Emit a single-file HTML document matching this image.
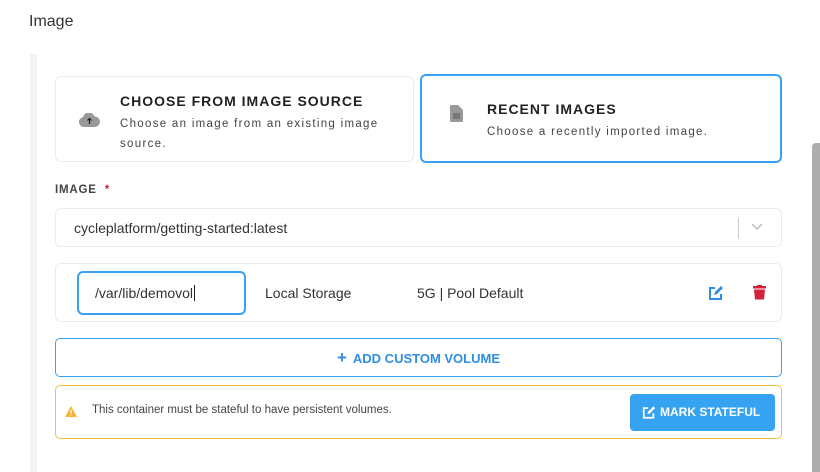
<!DOCTYPE html>
<html><head><style>
*{box-sizing:border-box;margin:0;padding:0}
body{width:820px;height:472px;background:#fff;font-family:"Liberation Sans",sans-serif;position:relative;overflow:hidden;color:#333}
.a{position:absolute}
.card{border:1px solid #ececec;border-radius:6px;background:#fff}
.t{font-size:14px;font-weight:bold;letter-spacing:1px;color:#222}
.s{font-size:11.5px;letter-spacing:1.3px;color:#444;line-height:20px}
</style></head><body>
<div class="a" style="left:29px;top:13px;font-size:16px;color:#333">Image</div>
<div class="a" style="left:30px;top:54px;width:7px;height:418px;background:#f3f3f3"></div>
<div class="a" style="left:812px;top:143px;width:8px;height:329px;background:#adadad;border-radius:4px 0 0 0"></div>

<div class="a card" style="left:55px;top:76px;width:359px;height:86px">
 <svg class="a" style="left:23px;top:36px" width="21" height="14" viewBox="0 0 21 14"><path d="M5 14a5 5 0 0 1-1-9.9A6 6 0 0 1 15.5 3.5 5 5 0 0 1 16 14z" fill="#999"/><path d="M10.5 11V5.5M8.5 7.5l2-2 2 2" stroke="#222" stroke-width="1.2" fill="none"/></svg>
 <div class="a t" style="left:64px;top:16px">CHOOSE FROM IMAGE SOURCE</div>
 <div class="a s" style="left:64px;top:37px;width:275px">Choose an image from an existing image source.</div>
</div>
<div class="a" style="left:420px;top:74px;width:362px;height:89px;border:2px solid #3ba0f0;border-radius:6px">
 <svg class="a" style="left:28px;top:29px" width="13" height="17" viewBox="0 0 13 17"><path d="M1 0h7l5 5v11a1 1 0 0 1-1 1H1a1 1 0 0 1-1-1V1a1 1 0 0 1 1-1z" fill="#999"/><path d="M3 9h7M3 11h7M3 13h7" stroke="#555" stroke-width="1"/></svg>
 <div class="a t" style="left:65px;top:25px">RECENT IMAGES</div>
 <div class="a s" style="left:65px;top:46px">Choose a recently imported image.</div>
</div>

<div class="a" style="left:55px;top:184px;font-size:11.5px;font-weight:bold;letter-spacing:.8px;color:#444">IMAGE <span style="color:#d0223a;margin-left:4px">*</span></div>
<div class="a card" style="left:55px;top:208px;width:727px;height:39px">
 <div class="a" style="left:18px;top:11px;font-size:14px;color:#333">cycleplatform/getting-started:latest</div>
 <div class="a" style="left:682px;top:9px;width:1px;height:21px;background:#ccc"></div>
 <svg class="a" style="left:695px;top:14px" width="12" height="8" viewBox="0 0 12 8"><path d="M1 1l5 5 5-5" stroke="#bbb" stroke-width="1.5" fill="none"/></svg>
</div>

<div class="a card" style="left:55px;top:263px;width:727px;height:59px">
 <div class="a" style="left:21px;top:7px;width:169px;height:44px;border:2px solid #3ba0f0;border-radius:6px">
  <div class="a" style="left:16px;top:12px;font-size:14px;color:#333">/var/lib/demovol<span style="border-left:1px solid #222;margin-left:1px"></span></div>
 </div>
 <div class="a" style="left:209px;top:21px;font-size:14px;color:#333">Local Storage</div>
 <div class="a" style="left:361px;top:21px;font-size:14px;color:#333">5G | Pool Default</div>
 <svg class="a" style="left:652px;top:21px" width="16" height="15" viewBox="0 0 16 15"><path d="M7 3H2v11h11V9" stroke="#2e8ee6" stroke-width="2" fill="none"/><path d="M6 10l1-3 6-6 2 2-6 6z" fill="#2e8ee6"/></svg>
 <svg class="a" style="left:697px;top:21px" width="13" height="15" viewBox="0 0 13 15"><rect x="0" y="1" width="13" height="2.5" fill="#d0223a"/><rect x="4" y="0" width="5" height="2" fill="#d0223a"/><path d="M1 4.5h11l-1 10H2z" fill="#d0223a"/></svg>
</div>

<div class="a" style="left:55px;top:338px;width:727px;height:39px;border:1px solid #3ba0f0;border-radius:5px;text-align:center;line-height:37px;font-size:13px;color:#2e8ee6;font-weight:bold">
 <span style="font-size:17px;font-weight:bold;margin-right:6px">+</span>ADD CUSTOM VOLUME</div>

<div class="a" style="left:55px;top:385px;width:727px;height:54px;border:1px solid #f6be3c;border-radius:5px">
 <svg class="a" style="left:9px;top:20px" width="12" height="11" viewBox="0 0 12 11"><path d="M6 0l6 11H0z" fill="#f6b531"/><path d="M6 4v3.5M6 8.5v1" stroke="#fff" stroke-width="1.3"/></svg>
 <div class="a" style="left:36px;top:18px;font-size:11.5px;color:#444">This container must be stateful to have persistent volumes.</div>
 <div class="a" style="left:574px;top:8px;width:145px;height:37px;background:#35a2f2;border-radius:4px;color:#fff;font-size:12px;font-weight:bold;line-height:37px;padding-left:30px">MARK STATEFUL
  <svg class="a" style="left:12px;top:11px" width="14" height="14" viewBox="0 0 16 15"><path d="M7 3H2v11h11V9" stroke="#fff" stroke-width="2" fill="none"/><path d="M6 10l1-3 6-6 2 2-6 6z" fill="#fff"/></svg>
 </div>
</div>
</body></html>
